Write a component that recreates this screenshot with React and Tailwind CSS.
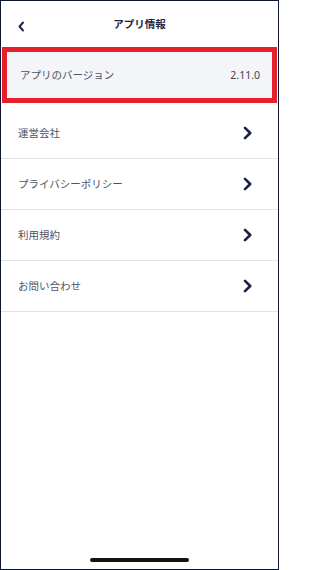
import React from "react";

const Chevron = () => (
  <svg width="11" height="14" viewBox="0 0 11 14" className="shrink-0">
    <path d="M3 1.8 L8.2 7 L3 12.2" fill="none" stroke="#1b2142" strokeWidth="2.6" strokeLinecap="round" strokeLinejoin="round" />
  </svg>
);

const items = ["運営会社", "プライバシーポリシー", "利用規約", "お問い合わせ"];

export default function App() {
  return (
    <div
      className="w-[279px] h-[570px] border border-[#0d1634] bg-white flex flex-col overflow-hidden"
      style={{ fontFamily: '"Noto Sans CJK JP", "Noto Sans", sans-serif' }}
    >
      <div className="h-[46px] shrink-0 relative flex items-center justify-center">
        <svg width="9" height="11" viewBox="0 0 9 11" className="absolute left-[16px] top-[20px]">
          <path d="M6 1.5 L2.5 5.5 L6 9.5" fill="none" stroke="#1b2142" strokeWidth="1.9" strokeLinecap="round" strokeLinejoin="round" />
        </svg>
        <span className="text-[10.5px] font-bold text-[#1e2546] leading-none">アプリ情報</span>
      </div>
      <div className="mx-[1px] h-[56px] shrink-0 border-[5px] border-[#e51f2b] bg-[#f4f5f9] flex items-center justify-between pl-[13px] pr-[12px]">
        <span className="text-[10.5px] text-[#4d5365] leading-none">アプリのバージョン</span>
        <span className="text-[10.5px] text-[#3c4254] leading-none" style={{ fontFamily: '"Noto Sans", sans-serif' }}>2.11.0</span>
      </div>
      <div className="mt-[5px] flex flex-col">
        {items.map((t) => (
          <div key={t} className="h-[51px] border-b border-[#e2e3e7] flex items-center justify-between pl-[17px] pr-[25px]">
            <span className="text-[10.5px] text-[#4d5365] leading-none">{t}</span>
            <Chevron />
          </div>
        ))}
      </div>
      <div className="flex-1" />
      <div className="h-[11px] shrink-0 flex justify-center">
        <div className="w-[99px] h-[4px] rounded-full bg-[#111]" />
      </div>
    </div>
  );
}
